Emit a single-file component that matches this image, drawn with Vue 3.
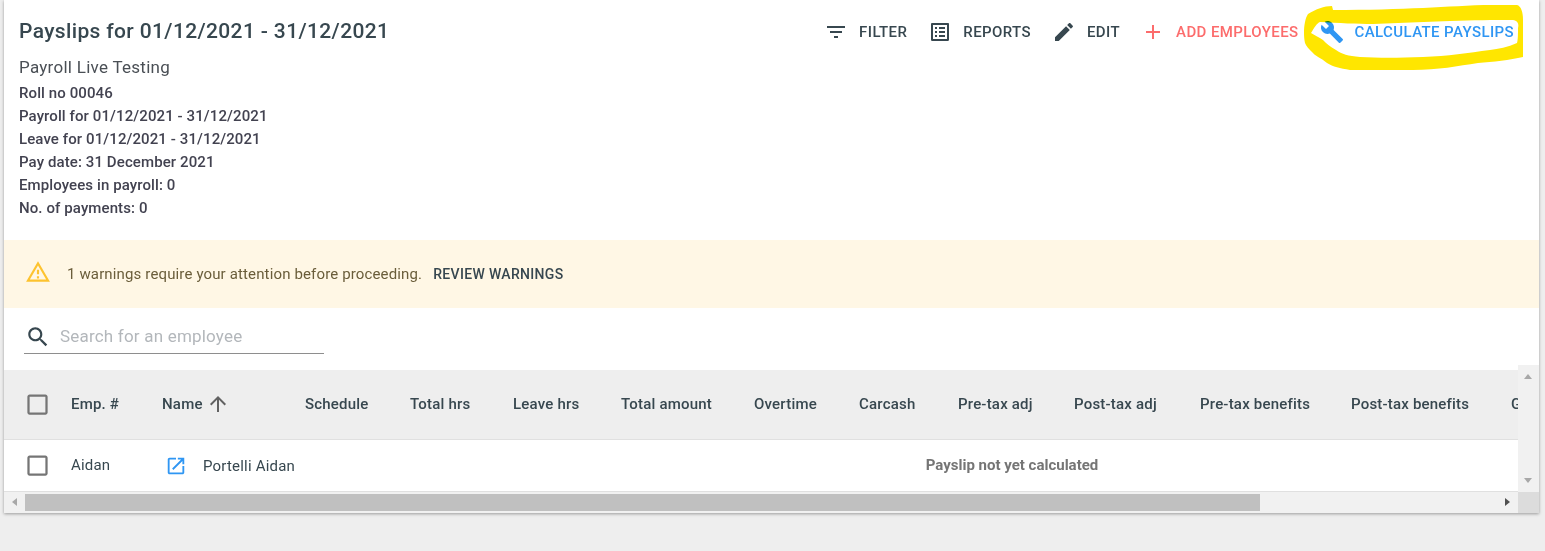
<script setup>
const info = [
  'Roll no 00046',
  'Payroll for 01/12/2021 - 31/12/2021',
  'Leave for 01/12/2021 - 31/12/2021',
  'Pay date: 31 December 2021',
  'Employees in payroll: 0',
  'No. of payments: 0',
]
const actions = [
  { label: 'Filter', tone: 'dark', d: 'M10 18h4v-2h-4v2zM3 6v2h18V6H3zm3 7h12v-2H6v2z' },
  { label: 'Reports', tone: 'dark', d: 'M19 5v14H5V5h14m1.1-2H3.9c-.5 0-.9.4-.9.9v16.2c0 .4.4.9.9.9h16.2c.4 0 .9-.5.9-.9V3.9c0-.5-.5-.9-.9-.9zM11 7h6v2h-6V7zm0 4h6v2h-6v-2zm0 4h6v2h-6zM7 7h2v2H7zm0 4h2v2H7zm0 4h2v2H7z' },
  { label: 'Edit', tone: 'dark', d: 'M3 17.25V21h3.75L17.81 9.94l-3.75-3.75L3 17.25zM20.71 7.04c.39-.39.39-1.02 0-1.41l-2.34-2.34c-.39-.39-1.02-.39-1.41 0l-1.83 1.83 3.75 3.75 1.83-1.83z' },
  { label: 'Add employees', tone: 'red', d: 'M19 13h-6v6h-2v-6H5v-2h6V5h2v6h6v2z' },
  { label: 'Calculate payslips', tone: 'blue', d: 'M22.7 19l-9.1-9.1c.9-2.3.4-5-1.5-6.9-2-2-5-2.4-7.4-1.3L9 6 6 9 1.6 4.7C.4 7.1.9 10.1 2.9 12.1c1.9 1.9 4.6 2.4 6.9 1.5l9.1 9.1c.4.4 1 .4 1.4 0l2.3-2.3c.5-.4.5-1.1.1-1.4z' },
]
const columns = [
  { label: 'Schedule', w: 105 },
  { label: 'Total hrs', w: 103 },
  { label: 'Leave hrs', w: 108 },
  { label: 'Total amount', w: 133 },
  { label: 'Overtime', w: 105 },
  { label: 'Carcash', w: 99 },
  { label: 'Pre-tax adj', w: 116 },
  { label: 'Post-tax adj', w: 126 },
  { label: 'Pre-tax benefits', w: 151 },
  { label: 'Post-tax benefits', w: 160 },
  { label: 'Gross', w: 208 },
]
const checkbox = 'M19 5v14H5V5h14m0-2H5c-1.1 0-2 .9-2 2v14c0 1.1.9 2 2 2h14c1.1 0 2-.9 2-2V5c0-1.1-.9-2-2-2z'
</script>

<template>
  <div class="page">
    <main class="card">
      <header class="head">
        <div class="summary">
          <h1 class="title">Payslips for 01/12/2021 - 31/12/2021</h1>
          <p class="subtitle">Payroll Live Testing</p>
          <p v-for="line in info" :key="line" class="line">{{ line }}</p>
        </div>
        <div class="actions">
          <button v-for="a in actions" :key="a.label" class="action" :class="a.tone">
            <svg class="icon" viewBox="0 0 24 24"><path :d="a.d" /></svg>
            <span>{{ a.label }}</span>
          </button>
        </div>
        <svg class="marker" viewBox="0 0 240 80" aria-hidden="true">
          <path fill-rule="evenodd" d="M17 43C15 34 16 20 20 14C28 9 36 6 44 6L45 10C80 10 110 9 135 8C160 7 180 5 205 5L229 5C233 6 235 12 235 20L235 57C222 60 205 62 190 63C170 66 150 70 125 70L62 70C52 68 45 67 39 63C33 58 26 55 25 53C21 49 18 46 17 43ZM23 33C26 28 29 23 32 22C50 23 70 24 85 24C110 23 135 22 162 21C185 20 205 20 225 20C230 21 231 24 230 28C230 34 230 40 229 43C220 47 210 49 202 50C180 53 160 56 135 57C110 58 90 58 72 57C60 56 54 54 48 50C42 47 38 43 35 40C31 37 26 35 23 33Z" />
        </svg>
      </header>

      <section class="banner">
        <svg class="warn" viewBox="0 0 24 24"><path d="M12 5.99L19.53 19H4.47L12 5.99M12 2L1 21h22L12 2zm1 14h-2v2h2v-2zm0-6h-2v4h2v-4z" /></svg>
        <span class="warn-text">1 warnings require your attention before proceeding.</span>
        <button class="review">Review warnings</button>
      </section>

      <div class="search">
        <svg class="search-icon" viewBox="0 0 24 24"><path d="M15.5 14h-.79l-.28-.27C15.41 12.59 16 11.11 16 9.5 16 5.91 13.09 3 9.5 3S3 5.91 3 9.5 5.91 16 9.5 16c1.61 0 3.09-.59 4.23-1.57l.27.28v.79l5 4.99L20.49 19l-4.99-5zm-6 0C7.01 14 5 11.99 5 9.5S7.01 5 9.5 5 14 7.01 14 9.5 11.99 14 9.5 14z" /></svg>
        <span class="placeholder">Search for an employee</span>
      </div>

      <div class="grid-area">
        <div class="grid-main">
          <div class="viewport">
            <div class="row header-row">
              <div class="cell check"><svg class="box" viewBox="0 0 24 24"><path :d="checkbox" /></svg></div>
              <div class="cell emp">Emp. #</div>
              <div class="cell name">
                Name
                <svg class="sort" viewBox="0 0 24 24"><path d="M4 12l1.41 1.41L11 7.83V20h2V7.83l5.58 5.59L20 12l-8-8-8 8z" /></svg>
              </div>
              <div v-for="c in columns" :key="c.label" class="cell" :style="{ width: c.w + 'px' }">{{ c.label }}</div>
            </div>
            <div class="row body-row">
              <div class="cell check"><svg class="box" viewBox="0 0 24 24"><path :d="checkbox" /></svg></div>
              <div class="cell emp">Aidan</div>
              <div class="cell name">
                <svg class="open" viewBox="0 0 24 24"><path d="M19 19H5V5h7V3H5c-1.11 0-2 .9-2 2v14c0 1.1.89 2 2 2h14c1.1 0 2-.9 2-2v-7h-2v7zM14 3v2h3.59l-9.83 9.83 1.41 1.41L19 6.41V10h2V3h-7z" /></svg>
                <span>Portelli Aidan</span>
              </div>
              <div class="cell message">Payslip not yet calculated</div>
            </div>
          </div>
          <div class="vbar">
            <i class="arrow up"></i>
            <i class="arrow down"></i>
          </div>
        </div>
        <div class="hbar">
          <div class="htrack">
            <i class="arrow left"></i>
            <div class="thumb"></div>
            <i class="arrow right"></i>
          </div>
          <div class="corner"></div>
        </div>
      </div>
    </main>
  </div>
</template>

<style>
html, body { margin: 0; background: #eeeeee; }
</style>

<style scoped>
.page {
  height: 551px;
  padding: 0 6px 0 4px;
  box-sizing: border-box;
  background: #eeeeee;
  overflow: hidden;
  font-family: Roboto, "Liberation Sans", sans-serif;
  color: #37474f;
}
.card {
  height: 513px;
  background: #fff;
  box-shadow: 0 1px 3px rgba(0, 0, 0, .35);
  display: flex;
  flex-direction: column;
}
.head {
  position: relative;
  display: flex;
  justify-content: space-between;
  height: 240px;
  padding: 16px 25px 0 15px;
  box-sizing: border-box;
}
.title {
  margin: 0 0 9px;
  font-size: 21px;
  line-height: 30px;
  font-weight: 500;
  letter-spacing: .36px;
}
.subtitle {
  margin: 0 0 3px;
  font-size: 17px;
  line-height: 24px;
  letter-spacing: .27px;
  color: #4a4f55;
}
.line {
  margin: 0;
  font-size: 15px;
  line-height: 23px;
  font-weight: 500;
  color: #424250;
  letter-spacing: .1px;
}
.actions {
  display: flex;
  align-items: center;
  gap: 21px;
  height: 32px;
}
.action {
  position: relative;
  z-index: 1;
  display: flex;
  align-items: center;
  gap: 11px;
  padding: 0;
  border: 0;
  background: none;
  font: 500 15px/20px Roboto, sans-serif;
  letter-spacing: .4px;
  text-transform: uppercase;
}
.icon { width: 24px; height: 24px; fill: currentColor; }
.dark { color: #37474f; }
.red { color: #fc6c6c; }
.blue { color: #2f96f3; }
.marker {
  position: absolute;
  right: 11px;
  top: 0;
  width: 240px;
  height: 80px;
  z-index: 2;
  mix-blend-mode: multiply;
  fill: #ffe600;
}
.banner {
  display: flex;
  align-items: center;
  height: 68px;
  padding-left: 21px;
  background: #fff7e5;
}
.warn { width: 26px; height: 26px; fill: #fdc32f; margin-top: -4px; }
.warn-text {
  margin-left: 16px;
  font-size: 15px;
  letter-spacing: .14px;
  color: #6a5d3a;
}
.review {
  margin-left: 11px;
  padding: 0;
  border: 0;
  background: none;
  color: #37474f;
  font: 500 14px/20px Roboto, sans-serif;
  letter-spacing: .33px;
  text-transform: uppercase;
}
.search {
  display: flex;
  align-items: center;
  box-sizing: border-box;
  width: 300px;
  height: 34px;
  margin: 12px 0 11px 20px;
  border-bottom: 1px solid #8e8e8e;
  gap: 9px;
  padding-left: 1px;
}
.search-icon { width: 26px; height: 26px; fill: #37474f; }
.placeholder {
  font-size: 17px;
  line-height: 24px;
  padding-bottom: 2px;
  letter-spacing: .2px;
  color: #b3b7bb;
}
.grid-area { display: flex; flex-direction: column; height: 148px; }
.grid-main { display: flex; height: 127px; }
.viewport {
  flex: 1;
  min-width: 0;
  overflow: hidden;
  padding-top: 5px;
}
.row { display: flex; align-items: center; width: 1715px; }
.header-row {
  height: 70px;
  background: #eeeeee;
  border-bottom: 1px solid #e0e0e0;
  box-sizing: border-box;
  font-size: 15px;
  font-weight: 500;
  letter-spacing: .2px;
}
.body-row {
  height: 52px;
  box-sizing: border-box;
  border-bottom: 1px solid #e0e0e0;
  font-size: 15px;
  letter-spacing: .2px;
}
.cell { flex: none; white-space: nowrap; }
.header-row .cell:not(.check),
.body-row .emp,
.body-row .message { padding-bottom: 2px; }
.check { width: 67px; display: flex; padding-left: 19.5px; box-sizing: border-box; }
.emp { width: 91px; }
.name { width: 143px; display: flex; align-items: center; }
.box { width: 27px; height: 27px; fill: #757575; }
.sort { width: 24px; height: 24px; fill: #616161; margin-left: 3px; }
.open { width: 22px; height: 22px; fill: #2f96f3; margin: 0 16px 0 3px; }
.message {
  flex: 1;
  text-align: center;
  font-weight: 700;
  color: #757575;
  letter-spacing: 0;
}
.vbar {
  position: relative;
  flex: none;
  width: 21px;
  background: #f1f1f1;
}
.hbar { display: flex; height: 21px; }
.htrack {
  flex: 1;
  display: flex;
  align-items: center;
  position: relative;
  background: #f1f1f1;
}
.thumb { width: 1235px; height: 17px; margin-left: 21px; background: #c0c0c0; }
.corner { width: 21px; background: #dcdcdc; }
.arrow { position: absolute; width: 0; height: 0; border: 4.5px solid transparent; }
.up { top: 9px; left: 6px; border-bottom: 5px solid #a8a8a8; border-top: 0; }
.down { bottom: 9px; left: 6px; border-top: 5px solid #a8a8a8; border-bottom: 0; }
.left { left: 8px; top: 6px; border-right: 5px solid #a8a8a8; border-left: 0; }
.right { right: 8px; top: 6px; border-left: 5px solid #505050; border-right: 0; }
</style>
